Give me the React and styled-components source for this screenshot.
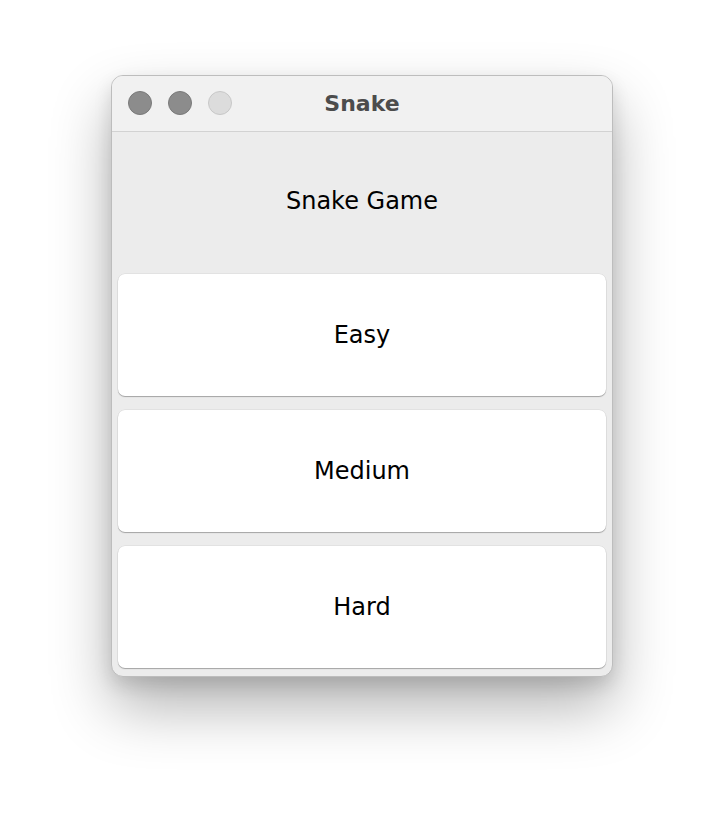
import React from 'react';
import styled, { createGlobalStyle } from 'styled-components';

const Global = createGlobalStyle`
  html, body { margin: 0; padding: 0; background: #ffffff; }
  body { font-family: "DejaVu Sans", "Liberation Sans", sans-serif; }
`;

const Page = styled.div`
  width: 724px;
  height: 824px;
  padding-top: 75px;
  padding-left: 111px;
  box-sizing: border-box;
`;

const Window = styled.div`
  width: 502px;
  height: 602px;
  box-sizing: border-box;
  border: 1px solid #bdbdbd;
  border-radius: 12px;
  background: #ececec;
  overflow: hidden;
  display: flex;
  flex-direction: column;
  box-shadow: 0 30px 60px rgba(0, 0, 0, 0.3), 0 8px 18px rgba(0, 0, 0, 0.12);
`;

const TitleBar = styled.div`
  height: 56px;
  flex: none;
  background: #f1f1f1;
  border-bottom: 1px solid #d2d2d2;
  display: flex;
  align-items: center;
  padding-left: 16px;
  padding-bottom: 1px;
  box-sizing: border-box;
  position: relative;
`;

const Lights = styled.div`
  display: flex;
  gap: 16px;
`;

const Light = styled.span`
  width: 24px;
  height: 24px;
  border-radius: 50%;
  box-sizing: border-box;
  background: ${p => (p.$off ? '#dcdcdc' : '#8c8c8c')};
  border: 1px solid ${p => (p.$off ? '#c8c8c8' : '#7a7a7a')};
`;

const Title = styled.div`
  position: absolute;
  left: 0;
  right: 0;
  text-align: center;
  font-size: 22px;
  font-weight: bold;
  color: #4c4c4c;
  pointer-events: none;
`;

const Body = styled.div`
  flex: 1;
  display: grid;
  grid-template-rows: repeat(4, 1fr);
`;

const Label = styled.div`
  display: flex;
  align-items: center;
  justify-content: center;
  font-size: 24px;
  color: #000;
  padding-top: 2px;
`;

const Cell = styled.div`
  padding: 6px 6px 8px 6px;
  display: flex;
`;

const ModeButton = styled.button`
  flex: 1;
  border: none;
  border-radius: 7px;
  background: #ffffff;
  font-family: inherit;
  font-size: 24px;
  color: #000;
  box-shadow: 0 0 0 0.5px rgba(0, 0, 0, 0.08), 0 1px 1px rgba(0, 0, 0, 0.28);
  cursor: pointer;
`;

export default function App() {
  const modes = ['Easy', 'Medium', 'Hard'];
  return (
    <Page>
      <Global />
      <Window>
        <TitleBar>
          <Lights>
            <Light />
            <Light />
            <Light $off />
          </Lights>
          <Title>Snake</Title>
        </TitleBar>
        <Body>
          <Label>Snake Game</Label>
          {modes.map(m => (
            <Cell key={m}>
              <ModeButton>{m}</ModeButton>
            </Cell>
          ))}
        </Body>
      </Window>
    </Page>
  );
}
